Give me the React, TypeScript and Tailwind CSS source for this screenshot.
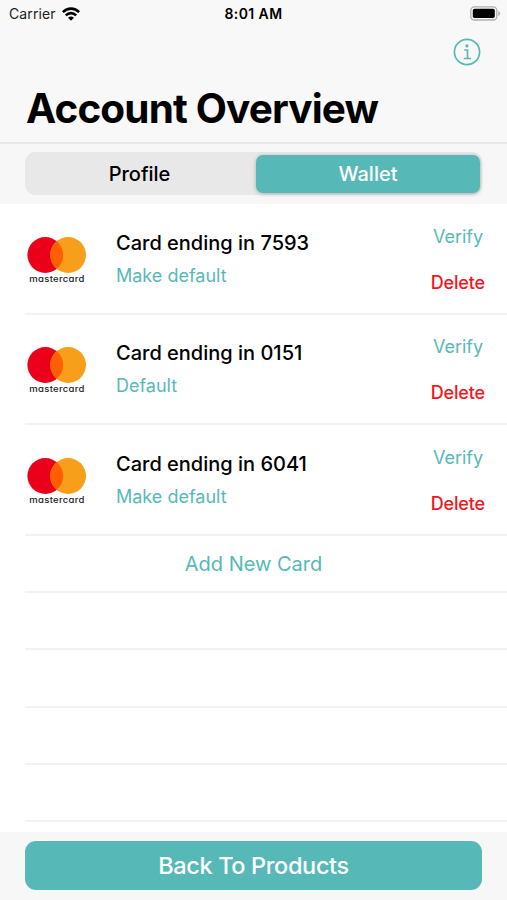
import { useState } from "react";
import clsx from "clsx";

type Card = {
  last4: string;
  isDefault: boolean;
  height: string;
};

const cards: Card[] = [
  { last4: "7593", isDefault: false, height: "h-[111px]" },
  { last4: "0151", isDefault: true, height: "h-[110px]" },
  { last4: "6041", isDefault: false, height: "h-[111px]" },
];

const emptyRows = ["h-[57px]", "h-[58px]", "h-[57px]", "h-[57px]"];

function WifiIcon() {
  return (
    <svg width="18" height="14" viewBox="0 0 18 14" fill="none" stroke="#000" strokeWidth="2.6">
      <path d="M0.9 5.1C5.4 0.5 12.6 0.5 17.1 5.1" />
      <path d="M3.8 8.4C6.8 5.4 11.2 5.4 14.2 8.4" />
      <path d="M9 13.8L6 10.8C7.8 9.2 10.2 9.2 12 10.8Z" fill="#000" stroke="none" />
    </svg>
  );
}

function BatteryIcon() {
  return (
    <svg width="31" height="15" viewBox="0 0 31 15">
      <rect x="0.8" y="0.8" width="26" height="13.2" rx="3.6" fill="#f7f7f7" stroke="#b0b0b0" strokeWidth="1.3" />
      <rect x="2.8" y="2.7" width="22" height="9.4" rx="1.8" fill="#000" />
      <path d="M28.3 5V10C30.8 9 30.8 6 28.3 5Z" fill="#b0b0b0" />
    </svg>
  );
}

function InfoIcon() {
  return (
    <svg width="28" height="28" viewBox="0 0 28 28" fill="none" stroke="#57b9b7">
      <circle cx="14" cy="14" r="12.6" strokeWidth="1.7" />
      <circle cx="13.9" cy="7.9" r="1.6" fill="#57b9b7" stroke="none" />
      <path d="M11.2 12H14.5V20.4M10.7 20.5H18" strokeWidth="1.7" />
    </svg>
  );
}

function MastercardLogo() {
  return (
    <div className="flex w-[60px] flex-col items-center">
      <svg width="60" height="36" viewBox="0 0 60 36">
        <circle cx="18.3" cy="18" r="17.9" fill="#eb001b" />
        <circle cx="41.1" cy="18" r="17.9" fill="#f79e1b" />
        <path d="M29.7 4.2A17.9 17.9 0 0 1 29.7 31.8A17.9 17.9 0 0 1 29.7 4.2Z" fill="#ff5f00" />
      </svg>
      <span className="inline-block origin-center scale-y-[0.9] text-[9.5px] leading-[11px] font-medium tracking-[0.3px] text-[#222] [font-feature-settings:'cv11']">
        mastercard
      </span>
    </div>
  );
}

function CardRow({ card }: { card: Card }) {
  return (
    <div className={clsx("ml-[25px] flex items-end border-b-2 border-[#f2f2f3]", card.height)}>
      <div className="pb-[29px] pl-[2px]">
        <MastercardLogo />
      </div>
      <div className="ml-[29px] flex flex-1 flex-col items-start pb-[24px]">
        <span className="text-[20px] leading-[28px] font-[450] text-black">Card ending in {card.last4}</span>
        <button className="mt-[6px] text-[18px] leading-[26px] text-[#57b9b7]">
          {card.isDefault ? "Default" : "Make default"}
        </button>
      </div>
      <div className="mr-[22px] flex flex-col items-end pb-[17px]">
        <button className="mr-[2px] text-[18px] leading-[26px] tracking-[-0.05px] text-[#57b9b7]">Verify</button>
        <button className="mt-[20px] text-[18px] leading-[26px] font-medium tracking-[-0.15px] text-[#f8141b]">
          Delete
        </button>
      </div>
    </div>
  );
}

export default function App() {
  const [tab, setTab] = useState<"profile" | "wallet">("wallet");

  const tabClass = (active: boolean) =>
    clsx(
      "h-[38px] rounded-[7px] text-[20px] leading-[38px] font-medium",
      active ? "bg-[#57b9b7] text-white shadow-[0_1px_4px_rgba(0,0,0,0.25)]" : "text-black"
    );

  return (
    <div className="flex h-[900px] w-[507px] flex-col overflow-hidden bg-white font-['Inter',sans-serif]">
      {/* Status bar + title */}
      <header className="h-[144px] shrink-0 border-b-2 border-[#e8e8e9] bg-[#f8f8f8]">
        <div className="grid h-[27px] grid-cols-3 items-center pr-[6px] pl-[9px]">
          <div className="flex items-center gap-[6px] text-[14px] tracking-[0.1px] text-[#222]">
            <span>Carrier</span>
            <WifiIcon />
          </div>
          <span className="-ml-[3px] text-center text-[14px] font-semibold tracking-[0.4px] text-black">8:01 AM</span>
          <div className="flex justify-end">
            <BatteryIcon />
          </div>
        </div>
        <div className="flex justify-end pt-[11px] pr-[26px]">
          <button aria-label="Info">
            <InfoIcon />
          </button>
        </div>
        <h1 className="mt-[18px] pl-[26px] text-[40.5px] leading-[50px] font-bold tracking-[-0.87px] whitespace-nowrap text-black">
          Account Overview
        </h1>
      </header>

      {/* Segmented control */}
      <div className="h-[60px] shrink-0 bg-[#f7f7f7] pt-[8px] pr-[25px] pl-[25px]">
        <div className="grid h-[43px] grid-cols-[229px_224px] gap-[2px] rounded-[10px] bg-[#e8e8e8] pt-[3px]">
          <button className={tabClass(tab === "profile")} onClick={() => setTab("profile")}>
            Profile
          </button>
          <button className={tabClass(tab === "wallet")} onClick={() => setTab("wallet")}>
            Wallet
          </button>
        </div>
      </div>

      {/* Cards */}
      <main className="flex-1">
        {cards.map((card) => (
          <CardRow key={card.last4} card={card} />
        ))}
        <div className="ml-[25px] h-[57px] border-b-2 border-[#f2f2f3] pr-[25px] text-center">
          <button className="text-[20px] leading-[57px] text-[#57b9b7]">Add New Card</button>
        </div>
        {emptyRows.map((height, i) => (
          <div key={i} className={clsx("ml-[25px] border-b-2 border-[#f2f2f3]", height)} />
        ))}
      </main>

      {/* Bottom action */}
      <footer className="h-[68px] shrink-0 bg-[#f7f7f7] px-[25px] pt-[9px]">
        <button className="h-[49px] w-full rounded-[11px] bg-[#57b9b7] text-[23.5px] leading-[50px] font-medium tracking-[-0.35px] text-white">
          Back To Products
        </button>
      </footer>
    </div>
  );
}
